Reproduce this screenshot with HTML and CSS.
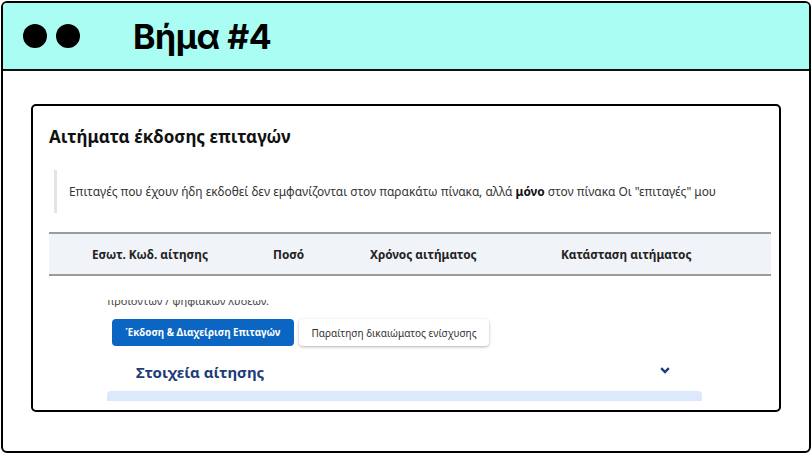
FILE: index.html
```html
<!DOCTYPE html>
<html lang="el">
<head>
  <meta charset="UTF-8" />
  <meta name="viewport" content="width=device-width, initial-scale=1" />
  <title>Βήμα #4</title>
  <link rel="stylesheet" href="styles.css">
</head>
<body>
  <div class="frame">
    <div class="head">
      <div class="dots"><span class="dot"></span><span class="dot"></span></div>
      <h1>Βήμα #4</h1>
    </div>
    <div class="stage">
      <div class="shot">
        <h2>Αιτήματα έκδοσης επιταγών</h2>
        <div class="note">Επιταγές που έχουν ήδη εκδοθεί δεν εμφανίζονται στον παρακάτω πίνακα, αλλά <b>μόνο</b> στον πίνακα Οι "επιταγές" μου</div>
        <div class="thead">
          <div>Εσωτ. Κωδ. αίτησης</div>
          <div>Ποσό</div>
          <div>Χρόνος αιτήματος</div>
          <div>Κατάσταση αιτήματος</div>
        </div>
        <div class="lower">
          <div class="cut"><p>προϊόντων / ψηφιακών λύσεων.</p></div>
          <div class="btns">
            <button class="btn primary">Έκδοση &amp; Διαχείριση Επιταγών</button>
            <button class="btn">Παραίτηση δικαιώματος ενίσχυσης</button>
          </div>
          <div class="section">
            <h3>Στοιχεία αίτησης</h3>
            <svg width="10" height="7" viewBox="0 0 10 7"><path d="M1.2 1.2 L5 5 L8.8 1.2" fill="none" stroke="#1d3c78" stroke-width="2.4"/></svg>
          </div>
          <div class="bar"></div>
        </div>
      </div>
    </div>
  </div>
</body>
</html>
```

FILE: styles.css
```css
body {
  margin: 0;
  background: #ffffff;
  font-family: "Noto Sans", "Open Sans", sans-serif;
}

.frame {
  margin: 1px 0 0 1px;
  width: 806px;
  height: 448px;
  border: 2px solid #000;
  border-radius: 6px;
  overflow: hidden;
}

.head {
  height: 66px;
  background: #a9fdf3;
  border-bottom: 2px solid #111;
  display: flex;
  align-items: center;
  padding-left: 20px;
}

.dots {
  display: flex;
  gap: 9px;
}

.dot {
  width: 24px;
  height: 24px;
  border-radius: 50%;
  background: #000;
}

.head h1 {
  margin: 0 0 0 53px;
  font-family: Inter, "Liberation Sans", sans-serif;
  font-weight: 700;
  font-size: 34px;
  letter-spacing: -0.5px;
  color: #000;
}

.stage {
  padding: 33px 0 0 28px;
}

.shot {
  height: 304px;
  width: 722px;
  border: 2px solid #000;
  border-radius: 5px;
  overflow: hidden;
  padding: 0 8px 0 16px;
}

h2 {
  margin: 19px 0 0;
  font-size: 17px;
  line-height: 24px;
  font-weight: 700;
  color: #111;
}

.note {
  margin: 21px 0 0 5px;
  border-left: 3px solid #e4e4e7;
  padding-left: 12px;
  height: 43px;
  line-height: 43px;
  font-size: 11.9px;
  color: #333;
  white-space: nowrap;
}

.note b {
  color: #111;
}

.thead {
  margin-top: 19px;
  height: 40px;
  background: #f0f3f8;
  border-top: 2px solid #9c9c9c;
  border-bottom: 2px solid #9c9c9c;
  display: grid;
  grid-template-columns: 181px 97px 191px 1fr;
  align-items: center;
  padding-left: 43px;
  font-size: 11.8px;
  font-weight: 700;
  color: #222;
}

.lower {
  padding-left: 58px;
}

/* top of this line is hidden above the visible area, as in the source screenshot */
.cut {
  margin-top: 24px;
  height: 7px;
  overflow: hidden;
}

.cut p {
  margin: -6px 0 0;
  font-size: 11px;
  line-height: 14px;
  color: #444;
}

.btns {
  display: flex;
  gap: 5px;
  margin: 12px 0 0 5px;
}

.btn {
  height: 27px;
  border: none;
  border-radius: 4px;
  background: #fff;
  box-shadow: 0 1px 3px rgba(0, 0, 0, 0.3);
  font-family: "Noto Sans", sans-serif;
  font-size: 10px;
  color: #333;
  width: 190px;
  padding: 0;
}

.btn.primary {
  width: 182px;
  background: #0a66c2;
  color: #fff;
  font-weight: 700;
  font-size: 9.8px;
  box-shadow: none;
}

.section {
  display: flex;
  align-items: center;
  justify-content: space-between;
  width: 534px;
  margin: 15px 0 0 29px;
}

.section h3 {
  margin: 0;
  font-size: 15px;
  line-height: 22px;
  font-weight: 700;
  color: #1d3c78;
}

.section svg {
  margin-top: -4px;
}

.bar {
  margin-top: 8px;
  width: 595px;
  height: 10px;
  background: #dce9fd;
  border-radius: 4px 4px 0 0;
}
```
